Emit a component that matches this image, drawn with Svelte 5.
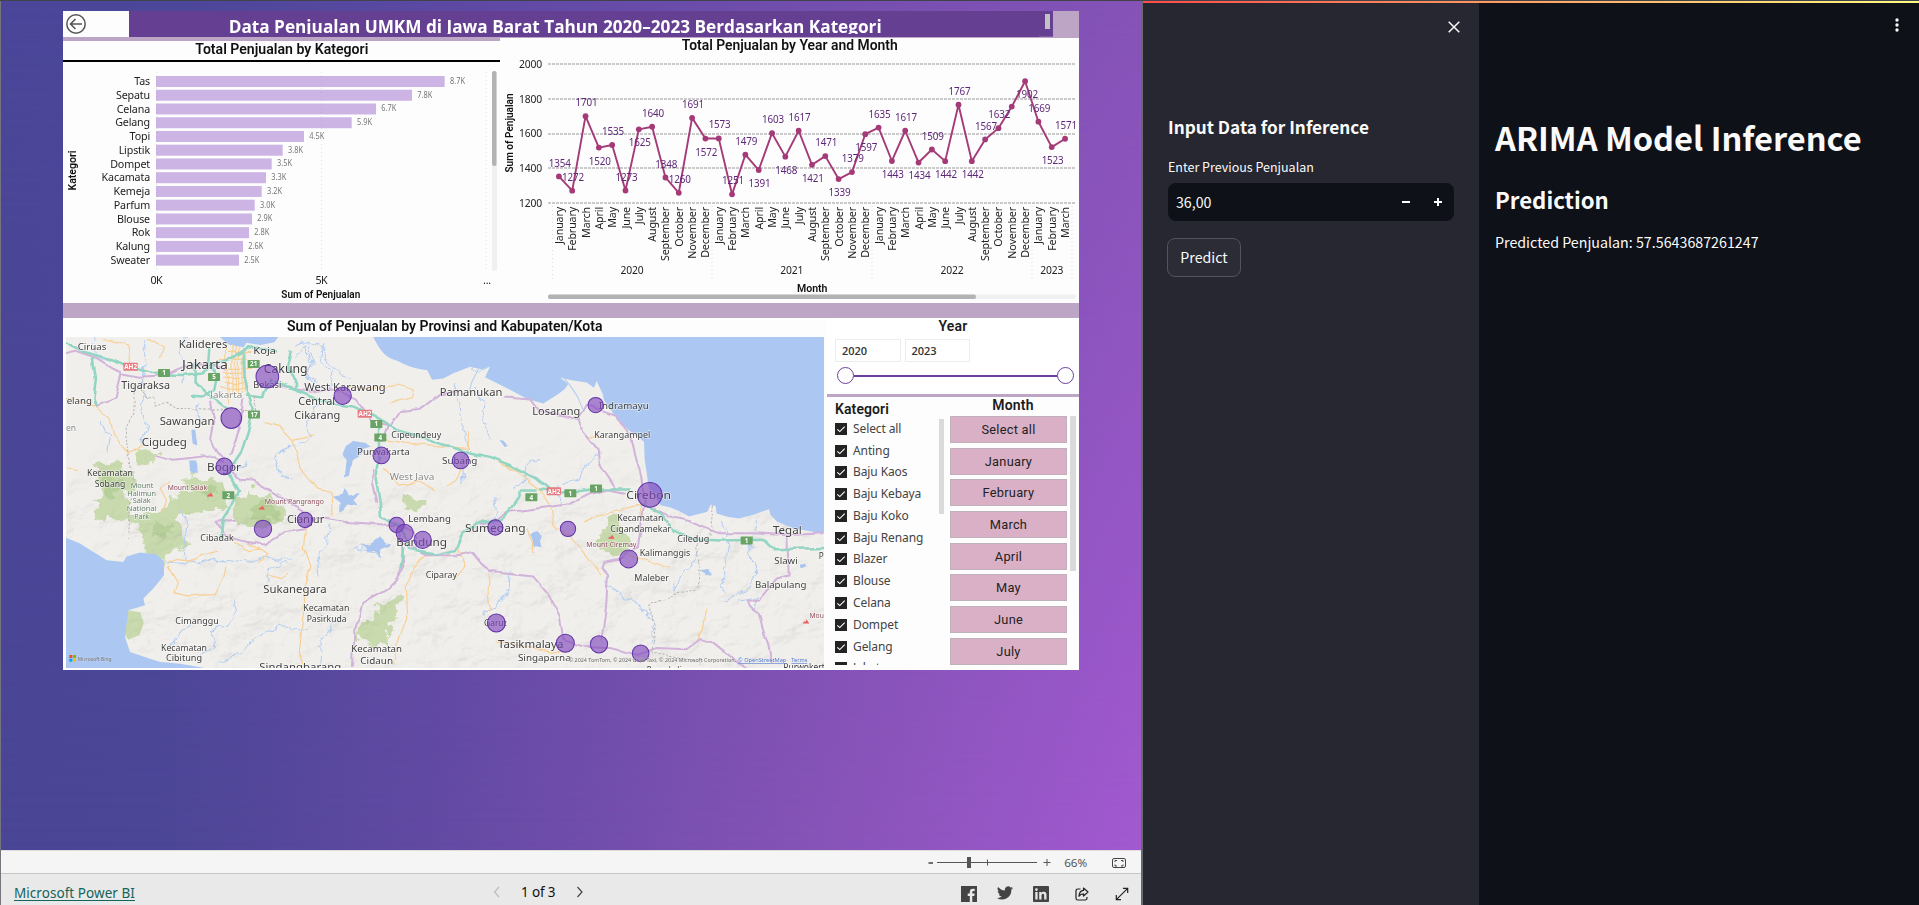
<script>
  const bars = [
    ['Tas', 288.7, '8.7K'], ['Sepatu', 256, '7.8K'], ['Celana', 220, '6.7K'], ['Gelang', 195.7, '5.9K'],
    ['Topi', 148, '4.5K'], ['Lipstik', 126.7, '3.8K'], ['Dompet', 115.7, '3.5K'], ['Kacamata', 110, '3.3K'],
    ['Kemeja', 105.7, '3.2K'], ['Parfum', 98.7, '3.0K'], ['Blouse', 96, '2.9K'], ['Rok', 93, '2.8K'],
    ['Kalung', 87, '2.6K'], ['Sweater', 83, '2.5K']
  ];

  const names = ['January', 'February', 'March', 'April', 'May', 'June', 'July', 'August', 'September', 'October', 'November', 'December'];
  // [value, y of the value label]; a null label is hidden by its neighbours
  const sales = [
    [1354, 163], [1272, 177], [1701, 102], [1520, 161.3], [1535, 130.7], [1273, 177], [1625, 142.3], [1640, 113],
    [1348, 164], [1260, 179.3], [1691, 104], [1572, 152.3], [1573, 124], [1251, 180], [1479, 140.7], [1391, 183],
    [1603, 119], [1468, 170], [1617, 117.3], [1421, 178], [1471, 142], [1339, 192], [1379, 158], [1597, 147],
    [1635, 114.3], [1443, 174], [1617, 117.3], [1434, 175], [1509, 136], [1442, 174], [1767, 91], [1442, 174],
    [1567, 126], [1632, 114], [1756, null], [1902, 94.3], [1669, 108], [1523, 160], [1571, 125]
  ];
  const px = (i) => 558.9 + i * 13.32;
  const py = (v) => 203.2 - (v - 1200) * 0.17375;
  const line = sales.map((s, i) => `${px(i)},${py(s[0])}`).join(' ');

  const categories = ['Select all', 'Anting', 'Baju Kaos', 'Baju Kebaya', 'Baju Koko', 'Baju Renang', 'Blazer', 'Blouse', 'Celana', 'Dompet', 'Gelang', 'Jaket'];
  const months = ['Select all', 'January', 'February', 'March', 'April', 'May', 'June', 'July'];

  // [text, centre x, baseline y, size, width, kind]
  const places = [
    ['Ciruas', 96, 104, 26, 86], ['Kalideres', 429, 100, 30, 146], ['Koja', 614, 116, 29, 68],
    ['Jakarta', 435, 162, 37, 138], ['Cakung', 677, 174, 37, 132], ['Tigaraksa', 257, 223, 30, 146],
    ['Bekasi', 622, 219, 26, 84], ['Jakarta', 499, 250, 25, 96, 'g'], ['elang', 58, 267, 28, 76],
    ['en', 33, 349, 26, 30, 'g'], ['Sawangan', 381, 329, 32, 164], ['Cigudeg', 313, 392, 33, 136],
    ['West Karawang', 855, 227, 30, 244], ['Central', 770, 271, 30, 110], ['Cikarang', 772, 311, 30, 138],
    ['Bogor', 492, 469, 33, 102], ['Kecamatan', 150, 484, 26, 138], ['Sobang', 150, 515, 26, 92],
    ['Mount', 246, 518, 21, 68, 'p'], ['Halimun', 245, 542, 21, 86, 'p'], ['Salak', 245, 565, 21, 54, 'p'],
    ['National', 245, 589, 21, 90, 'p'], ['Park', 245, 612, 21, 44, 'p'],
    ['Mount Salak', 382, 525, 21, 118, 'm'], ['Mount Pangrango', 703, 566, 22, 178, 'm'],
    ['Cianjur', 737, 623, 31, 112], ['Cibadak', 471, 677, 26, 100], ['Cipeundeuy', 1069, 369, 26, 150],
    ['Purwakarta', 970, 421, 27, 158], ['West Java', 1056, 495, 26, 134, 'g'], ['Lembang', 1109, 620, 28, 128],
    ['Bandung', 1085, 692, 34, 152], ['Ciparay', 1144, 788, 26, 94], ['Sukanegara', 705, 832, 33, 190],
    ['Kecamatan', 799, 887, 26, 138], ['Pasirkuda', 800, 919, 26, 120], ['Cimanggu', 411, 927, 26, 130],
    ['Kecamatan', 372, 1007, 26, 138], ['Cibitung', 372, 1037, 26, 108], ['Kecamatan', 950, 1010, 28, 152],
    ['Cidaun', 950, 1045, 28, 98], ['Sindangbarang', 721, 1068, 32, 246], ['Pamanukan', 1233, 244, 30, 188],
    ['Losarang', 1489, 300, 31, 144], ['Indramayu', 1691, 283, 28, 150], ['Karangampel', 1687, 368, 25, 168],
    ['Subang', 1199, 446, 28, 106], ['Cirebon', 1766, 551, 33, 134], ['Kecamatan', 1741, 618, 25, 138],
    ['Cigandamekar', 1742, 650, 26, 182], ['Mount Ciremay', 1654, 694, 21, 150, 'm'], ['Ciledug', 1900, 681, 26, 96],
    ['Kalimanggis', 1815, 721, 26, 152], ['Maleber', 1775, 797, 26, 104], ['Sumedang', 1306, 650, 32, 182],
    ['Tegal', 2182, 656, 32, 86], ['Slawi', 2178, 745, 27, 70], ['P', 2284, 731, 27, 15],
    ['Balapulang', 2162, 817, 29, 154], ['Mou', 2270, 908, 21, 43, 'm'], ['Garut', 1306, 931, 27, 68],
    ['Tasikmalaya', 1412, 997, 33, 196], ['Singaparna', 1453, 1037, 28, 158],
    ['Rancakalipucang', 1853, 1072, 28, 186], ['Purwokerto', 2240, 1068, 30, 140]
  ];
  const pins = [
    [622, 185, 34], [514, 309, 31], [848, 242, 26], [493, 454, 25], [964, 421, 25], [735, 614, 23], [609, 641, 26],
    [1010, 629, 23], [1034, 653, 26], [1088, 674, 26], [1202, 436, 25], [1306, 637, 23], [1607, 270, 23],
    [1769, 539, 37], [1524, 641, 23], [1706, 731, 27], [1309, 923, 27], [1516, 984, 27], [1617, 987, 26], [1742, 1014, 25]
  ];
  const shields = [
    [581, 147, '21'], [312, 174, '1'], [462, 186, '5'], [582, 298, '17'], [949, 327, '1'], [961, 367, '4'], [505, 540, '2'],
    [1414, 546, '4'], [1531, 534, '1'], [1608, 520, '1'], [2060, 676, '1']
  ];
  const asian = [[212, 155], [915, 296], [1482, 528]];
  const peaks = [[450, 538], [605, 577], [1654, 665], [2238, 919]];
</script>

<div class="screen">
  <section class="powerbi">
    <div class="report">
      <div class="canvas">
        <header class="titlebar">
          <div class="back">
            <svg width="22" height="22" viewBox="0 0 22 22"><circle cx="11" cy="11" r="9.2" fill="none" stroke="#555" stroke-width="1.5"/><path d="M17 11H6M10.500 6L5.500 11l5 5" fill="none" stroke="#555" stroke-width="1.6"/></svg>
          </div>
          <div class="title">
            <svg width="924" height="26" viewBox="129 11 924 26">
              <text x="228.700" y="33" textLength="653" lengthAdjust="spacingAndGlyphs" class="heading">Data Penjualan UMKM di Jawa Barat Tahun 2020–2023 Berdasarkan Kategori</text>
              <rect x="1045" y="14" width="5" height="15" fill="#c2c2c2"/>
              <rect x="129" y="34" width="910" height="3" fill="#653f92"/>
            </svg>
          </div>
          <div class="corner"></div>
        </header>

        <div class="charts">
          <svg class="barchart" width="437" height="262" viewBox="63 41 437 262">
            <text x="195.300" y="54" class="din t14" textLength="173" lengthAdjust="spacingAndGlyphs">Total Penjualan by Kategori</text>
            <rect x="63" y="60" width="437" height="2" fill="#000"/>
            {#each bars as [name, w, label], i}
              <rect x="156" y={76 + i * 13.744} width={w} height="11" fill="#ccb5e5"/>
              <text x="150" y={85.2 + i * 13.744} class="seg" text-anchor="end">{name}</text>
              <text x={161.3 + w} y={84 + i * 13.744} class="val" textLength="15" lengthAdjust="spacingAndGlyphs">{label}</text>
            {/each}
            {#each [156.5, 321.5, 486] as x}
              <line x1={x} x2={x} y1="72" y2="271" stroke="#888" stroke-opacity=".22" stroke-dasharray="1 3"/>
            {/each}
            <text x="156.500" y="284" class="seg" text-anchor="middle" textLength="12">0K</text>
            <text x="321.500" y="284" class="seg" text-anchor="middle" textLength="12">5K</text>
            <text x="487" y="284" class="seg" text-anchor="middle">...</text>
            <text x="281.300" y="298" class="din t10" textLength="79" lengthAdjust="spacingAndGlyphs">Sum of Penjualan</text>
            <text transform="translate(76 190.500) rotate(-90)" class="din t10" textLength="40" lengthAdjust="spacingAndGlyphs">Kategori</text>
            <rect x="492" y="71" width="5" height="200" rx="2.500" fill="#f0f0f0"/>
            <rect x="492" y="71" width="4.500" height="95" rx="2" fill="#b3b3b3"/>
          </svg>

          <svg class="linechart" width="579" height="265" viewBox="500 38 579 265">
            <text x="681.700" y="50" class="din t14" textLength="216" lengthAdjust="spacingAndGlyphs">Total Penjualan by Year and Month</text>
            {#each [2000, 1800, 1600, 1400, 1200] as v}
              <line x1="548" x2="1076" y1={Math.round(py(v))} y2={Math.round(py(v))} stroke="#cbcbcb" stroke-width="2" stroke-dasharray="3 1"/>
              <text x="519" y={py(v) + 3.7} class="seg" textLength="23" lengthAdjust="spacingAndGlyphs">{v}</text>
            {/each}
            {#each [552.5, 712, 872, 1032, 1072] as x}
              <line x1={x} x2={x} y1="206" y2="280" stroke="#dcdcdc" stroke-dasharray="1 3"/>
            {/each}
            <polyline points={line} fill="none" stroke="#a43a77" stroke-width="1.9" stroke-linejoin="round"/>
            {#each sales as [v, ly], i}
              <circle cx={px(i)} cy={py(v)} r="2.900" fill="#a43a77"/>
              {#if ly}
                <text x={px(i) - 10.7 + (i === 35 ? 1.5 : 0.6)} y={ly + 4} class="seg num" textLength="22" lengthAdjust="spacingAndGlyphs">{v}</text>
              {/if}
              <text transform="translate({px(i) + 4} 207) rotate(-90)" class="seg" text-anchor="end">{names[i % 12]}</text>
            {/each}
            {#each [[632, '2020'], [791.7, '2021'], [952, '2022'], [1051.7, '2023']] as [x, y]}
              <text x={x - 11.5} y="274" class="seg" textLength="23" lengthAdjust="spacingAndGlyphs">{y}</text>
            {/each}
            <text x="797" y="292" class="din t10" textLength="30.500" lengthAdjust="spacingAndGlyphs">Month</text>
            <text transform="translate(513 172.500) rotate(-90)" class="din t10" textLength="79" lengthAdjust="spacingAndGlyphs">Sum of Penjualan</text>
            <rect x="548" y="294.500" width="528" height="4.500" rx="2" fill="#f0f0f0"/>
            <rect x="548" y="294.500" width="428" height="4.500" rx="2" fill="#b3b3b3"/>
          </svg>
        </div>

        <div class="lower">
          <div class="mapcard">
            <svg class="maptitle" width="764" height="19" viewBox="63 318 764 19">
              <text x="287" y="331" class="din t14" textLength="315.500" lengthAdjust="spacingAndGlyphs">Sum of Penjualan by Provinsi and Kabupaten/Kota</text>
            </svg>
            <svg class="map" width="758" height="331" viewBox="18 66 2274 992" preserveAspectRatio="none">
              <defs>
                <filter id="relief" x="0" y="0" width="1" height="1">
                  <feTurbulence type="fractalNoise" baseFrequency="0.008 0.011" numOctaves="5" seed="7" result="n"/>
                  <feDiffuseLighting in="n" lighting-color="#fff" surfaceScale="26" diffuseConstant="1.150"><feDistantLight azimuth="225" elevation="60"/></feDiffuseLighting>
                </filter>
                <filter id="ragged" x="-.1" y="-.1" width="1.2" height="1.2">
                  <feTurbulence type="fractalNoise" baseFrequency="0.025" numOctaves="4" seed="3"/>
                  <feDisplacementMap in="SourceGraphic" scale="60" xChannelSelector="R" yChannelSelector="G"/>
                </filter>
                <filter id="wavy" filterUnits="userSpaceOnUse" x="-20" y="30" width="2350" height="1060">
                  <feTurbulence type="fractalNoise" baseFrequency="0.025" numOctaves="3" seed="5"/>
                  <feDisplacementMap in="SourceGraphic" scale="34" xChannelSelector="R" yChannelSelector="G"/>
                </filter>
                <filter id="gentle" filterUnits="userSpaceOnUse" x="-20" y="30" width="2350" height="1060">
                  <feTurbulence type="fractalNoise" baseFrequency="0.018" numOctaves="2" seed="9"/>
                  <feDisplacementMap in="SourceGraphic" scale="18" xChannelSelector="R" yChannelSelector="G"/>
                </filter>
                <linearGradient id="fade" x1="0" y1="0" x2="0" y2="1"><stop offset=".25" stop-color="#000"/><stop offset=".55" stop-color="#fff"/></linearGradient>
                <mask id="hills"><rect x="18" y="66" width="2274" height="992" fill="url(#fade)"/></mask>
              </defs>
              <rect x="18" y="66" width="2274" height="992" fill="#f0efec"/>

              <g fill="#c9dbae" filter="url(#ragged)">
                <path d="M112 440l30-6 25 15 35 6 16 14 4 40-24 30 30 60 50-4 60-30 10-30 40-10-10-34 30-16 40 22 50 6 10 34-10 30-40 20-60 6-40 0-14 30 40 30 10 30-34 24-40 8-12 40-24-34-30-6 4-50-30-26-34-24-26 10-34-20-30 10-10-24 24-24-24-10 40-26-14-40z"/>
                <path d="M222 420l30-16 40 8-10 26-30 10-14 18-16-20z"/>
                <path d="M510 590l26-34 40-26 50 10 30 30 20 30-10 30-40-10-20 20-40-6-34-14z"/>
                <path d="M1016 565l30-30 30 14 24 2-10 26-20 14-24-18z"/>
                <path d="M954 856l34-4 30 6 20-10 4 16-30 14-14 40-16 34 6 36-34-6-40-2-26-14 20-44 40-20 14-20z"/>
                <path d="M1602 660l30-14 20-52 20 6 14 40 26 40-20 30-34 16-26-30-20-6z"/>
              </g>
              <path d="M205 885l36 6 10 32-12 36-34 14-14-20z" fill="#c9dbae"/>
              <g fill="#a3c281" opacity=".45" filter="url(#ragged)"><path d="M570 590l34-36 40 34 20 26-60 0z"/><path d="M410 530l50-14 10 24-40 16z"/><path d="M130 490l40 10 14 34-40 10zM270 620l50 10 10 30-40 6z"/></g>
              <g mask="url(#hills)" class="shade"><rect x="18" y="66" width="2274" height="992" filter="url(#relief)"/></g>

              <g fill="#abc7f2">
                <path d="M480 66h175l-12 16-42 8-42-7-8 14-44-8-12-9z"/>
                <path d="M940 66c20 40 34 62 74 72 26 14 46 22 88 28l14 28 34-4 30-15 50-20 35 8 25-8-15 32 50 24 35 18 40 22 50 14 45-28 20-16 10-15-25-18 40 8 40 6 22 16 8-20 18 38 4 20 40 56 30 30 50 38 2 52 13 90 35 48 30 7 30 13 25 14 55-14 10-22 15 5 3 22 32 10 35 5 45-12 45-16 5 18 20 20 50 20 92 15V66z"/>
                <path d="M18 668l42 17 40 25 40 25 50 5 10-16 40-12 50 6 22 20v42l-32 40-30 30 5 20-50 15-10 80 15 45 60 20 30 10 60 5 70 12V1058H18z"/>
              </g>
              <g fill="#a9c5f0" filter="url(#gentle)">
                <path d="M855 392l24-14 40 6 16 10-24 8-16 24-20 10-8 46-16 4 6-50-12-20z"/>
                <path d="M818 545l30-6 6-18 10 20 36-8-20 24 16 20-30-6-26 18 2-26z"/>
                <path d="M898 690l32-6 30-22 14 22 24 4-20 8-20 6-2 30-12-28-18 4-6-16z"/>
                <path d="M1412 655l24-14 10 20-6 18 4 20-20-4-4-24z"/>
                <path d="M1318 374l14 4 12 14-10 4zM1920 768l24-4 16 12-20 4zM2220 746l20-4 6 8-20 6zM394 344h12l6 50-14-6zM388 436h24v34h-22z"/>
              </g>

              <g class="river" filter="url(#wavy)">
                <path d="M248 66l10 40-12 60 14 60-14 50 10 60-16 50M370 66l-10 44 14 50-6 50M700 90l40-14 40 20 30 50 36 30 30 10M710 120l20-30 24 50-14 40 30 20M740 80l20 60-20 30 30 50M790 90l-10 50 40 30-10 60M770 260l-30 60 10 40-60 30-40 40 10 44 40 20M360 570l20 60-10 50 10 50"/>
                <path d="M300 750l60-10 60 6 60-14 80 12 60-20 40 14 40-10M520 850l10 40-30 40-50 20 6 40-30 40M326 1010l24-50 50-40M810 620l-10 60-24 60 4 50M780 1040l4-60 50-70M1180 210l20 60 10 70 14 60-20 50 6 60M1620 400l-20 30-30 20-10 40-60 20-6 60M1440 430l-30 10-20 60-30 20M1300 540l10 50-20 60M1240 220l30 50 4 60 20 50"/>
                <path d="M1350 770l-10 50-30 50-40 30M1630 800l60 40 60 40 30 40-10 60M1910 690l-16 60-40 40-20 40M1990 610l14 90-14 60 6 70M2100 600l-20 60-10 50 20 60-40 60-60 30M2040 860l60-10-20 40M620 800l10-40 60-20M480 1040l60-30 60-50 60-30 80 10"/>
                <path d="M880 700l60 10M100 66l10 60 50 10M1230 130l10 40 40-10M420 260l-20 40 20 30M120 320l30 40-10 50M560 440l-40 20 30 40"/>
              </g>
              <path class="river" d="M1508 184l24 30 20 30 20 46M1256 160l-20 40-10 34"/>
              <g class="minor" filter="url(#gentle)">
                <path d="M130 70l70 20 10 60M18 250l86 20 46 40 10 50 50 56 40-30M496 96l10 170M516 90v150M536 100l-4 150M556 110v120M480 130h80M484 160h90M490 190h70M484 220h70M504 112h70M488 175h60M494 205h60M526 96v130M546 104v130M610 318l50 14 40 44 60-14M700 376l20 80 30 40 30 26 36 10 4 70"/>
                <path d="M322 740l26-10 40 4 40-16 46-10M322 752l30 50-10 30 40 10 80-4 30-54 6-34M525 680l30 26 46-4 20 14-20 30M736 640l-6 60 20 50-20 60 4 50-10 90-6 60 20 50M626 780l40 10 20-20M556 684l46 20M1000 1050l10-60 30-80-4-100 30-60 40-36M970 460l50 50 60-10 50 30M18 460l40 10M330 500l-30 20 20 40-20 30M860 210l60 14 90-14 50 14-6 24-60 14M260 66l50 30-8 36"/>
                <path d="M960 370l70 14 60 4 130 12M1225 350v46l-10 50-30 50-24 20M1310 440l60 26 66 54 40 60 10 60 40 20 60 70 40 50M1570 620l40-20 70-14 60-14M1182 790l30-40-20-50M1288 780l-4 50 6 60M1400 640l20 40v36M1700 720l60 16 70 20M1940 880l-10 60-20 40M1310 980l120 20 90 14M1330 440l20 20M1580 366h40M1740 560l4 50"/>
              </g>
              <g class="major" filter="url(#gentle)">
                <path d="M18 118l30-10 60 20 80 50 50 10 70-4 50-24 60-16 80 20M186 170l-20 80-60 24M450 260l10 60-10 50 40 60M550 250l-10 90-30 80M290 420l50 14 60-6 60-8 30 20M640 210l110 20 60-10 80 30 40 70 60 14 30-46 60-6 60-44 60-10"/>
                <path d="M500 460l40 34 40 2 70 40 40 30 40 24M560 680l50 8 60-36 60-10 40-36 80 14 60 4 100 6 50 20 14 20M530 610l-60 10 20 40 90 26M965 380l20-50M945 460l-10 40 14 60M1010 650l16 40 4 60-20 40-30 30-70 40-10 50-20 40-4 104"/>
                <path d="M1330 244l80 6 30 40 120 26 6 30 50 60 4 40 50 76M1560 310l20-40 90 30 44 70 30 120 10 70-10 70-10 60-54 40-50 10-6 16 20 20-6 100-14 100M1470 575l60-8 60-30 50-14 60 10M1040 690l60 30h90l50-10 50 60 130 14 50 60 30 60 10 70 60 20 80 4 80 20 60-20 90 4 40-30 40 10 50 40 60 46M1260 630l90-40 130-16M1780 580l50 24 60 14 80 36h110l100 6 112-6M2182 660l4 120-36 10-50 60-40 4 36 40 10 40 20 60 10 50"/>
              </g>
              <g class="toll" filter="url(#gentle)">
                <path d="M18 84l60 28 70 20 60 26 90 20 70 2 60-8 36-26 50-18 50-28 90 6M404 140v60l40 40 40 30 20 12M448 100l-4 50 30 34-8 44-40 16-30-2M550 110l4 80 24 90-14 70-20 60-40 60 30 54-20 50-26 40-6 60M690 106l-12 50 30 40v30M634 190l-26 54-50-6M640 200l80 30 60 30 100 14 60 30 70 40 90 26 120 40 70 16 60 24 80 40 46 40"/>
                <path d="M957 330v110l-10 50 12 70 4 40 50 34 24 40 10 30 80 14 60-14 20-50 60-34 60-10 20-20 30-40 6-24h50M1440 522l60 10 70-2 60-10h80M1740 570l60 24 40 54 60 24 80 4 130-2 30 28 150-4"/>
                <path d="M98 126l10 66-8 60 8 20M1030 700l-8 60"/>
              </g>
              <g class="border" filter="url(#gentle)">
                <path d="M586 240v44l-240-4-30-20-30 10-10-24-20 4-20-30 10-20-24 14v80l-24 40 10 90 10 70-10 80-6 100"/>
                <path d="M1960 570l-10 90-40 30 10 80-10 50-80 26-64 24 20 60-10 80 110 20 40 20"/>
              </g>

              {#each asian as [x, y]}
                <g transform="translate({x} {y})"><rect x="-22" y="-12" width="43" height="24" rx="2" fill="#e57b80"/><text y="7" font-size="19" font-weight="700" fill="#fff" text-anchor="middle">AH2</text></g>
              {/each}
              {#each shields as [x, y, n]}
                <g transform="translate({x} {y})"><rect x="-18" y="-12" width="36" height="24" rx="2" fill="#69a465"/><text y="7" font-size="19" font-weight="700" fill="#fff" text-anchor="middle">{n}</text></g>
              {/each}
              {#each peaks as [x, y]}
                <path transform="translate({x} {y})" d="M-10 6l5-7 3 2 4-7 8 12z" fill="#ee5d5d"/>
              {/each}
              {#each places as [t, x, y, s, w, k]}
                <text x={x - w / 2} {y} font-size={s} textLength={w} lengthAdjust="spacingAndGlyphs" class="place {k ?? 'n'}">{t}</text>
              {/each}
              {#each pins as [x, y, r]}
                <circle cx={x} cy={y} {r} fill="#8047bd" fill-opacity=".64" stroke="#5f33a5" stroke-width="3"/>
              {/each}
              <g transform="translate(28 1019)"><path fill="#f25022" d="M0 0h9v9H0z"/><path fill="#7fba00" d="M11 0h9v9h-9z"/><path fill="#00a4ef" d="M0 11h9v9H0z"/><path fill="#ffb900" d="M11 11h9v9h-9z"/></g>
              <text x="53" y="1036" font-size="18" class="place c" textLength="102" lengthAdjust="spacingAndGlyphs">Microsoft Bing</text>
              <text x="1526" y="1041" font-size="18" class="place c" textLength="502" lengthAdjust="spacingAndGlyphs">© 2024 TomTom, © 2024 Grab Taxi, © 2024 Microsoft Corporation,</text>
              <text x="2034" y="1041" font-size="18" class="place l" textLength="145" lengthAdjust="spacingAndGlyphs">© OpenStreetMap</text>
              <text x="2194" y="1041" font-size="18" class="place l" textLength="48" lengthAdjust="spacingAndGlyphs">Terms</text>
            </svg>
          </div>

          <aside class="slicers">
            <div class="year">
              <div class="slicer-title">Year</div>
              <div class="inputs"><span>2020</span><span>2023</span></div>
              <div class="range"><i></i><b></b><i></i></div>
            </div>
            <div class="pair">
              <div class="cats">
                <div class="slicer-title left">Kategori</div>
                <div class="scroller">
                  <ul>
                    {#each categories as c}
                      <li><svg width="12" height="12" viewBox="0 0 12 12"><rect width="12" height="12" fill="#232323"/><path d="M2.300 6.300l2.500 2.300 4.900-5" fill="none" stroke="#fff" stroke-width="1.100"/></svg>{c}</li>
                    {/each}
                  </ul>
                  <div class="thumb short"></div>
                </div>
              </div>
              <div class="mons">
                <div class="slicer-title">Month</div>
                <div class="scroller">
                  <div class="buttons">
                    {#each months as m}<div>{m}</div>{/each}
                  </div>
                  <div class="thumb long"></div>
                </div>
              </div>
            </div>
          </aside>
        </div>
      </div>
    </div>

    <div class="zoombar">
      <svg width="220" height="22" viewBox="922 851 220 22">
        <path d="M938 862.500h100M988.500 859.500v6M1044.500 862.500h7M1048 859v7" fill="none" stroke="#555" stroke-width="1"/>
        <path d="M929.500 863h4.500" stroke="#444" stroke-width="1.500"/>
        <rect x="968" y="857" width="4" height="11" fill="#555"/>
        <text x="1065.300" y="867" class="seg pct" textLength="22.700" lengthAdjust="spacingAndGlyphs">66%</text>
        <rect x="1113.500" y="858.500" width="13" height="9" rx="1.500" fill="none" stroke="#444"/>
        <path d="M1116 862v-1.500h2M1122 860.500h2v1.500M1124 864.500v1.500h-2M1118 866h-2v-1.500" fill="none" stroke="#444"/>
      </svg>
    </div>

    <footer>
      <a href="#report">Microsoft Power BI</a>
      <div class="pager">
        <svg width="8" height="12" viewBox="0 0 8 12"><path d="M6 1L1.500 6 6 11" fill="none" stroke="#bdbdbd" stroke-width="1.200"/></svg>
        <span>1 of 3</span>
        <svg width="8" height="12" viewBox="0 0 8 12"><path d="M1.500 1L6 6l-4.500 5" fill="none" stroke="#444" stroke-width="1.200"/></svg>
      </div>
      <div class="social">
        <svg width="16" height="16" viewBox="0 0 16 16"><path d="M0 0h16v16h-4.700V10h2l.4-2.400h-2.400V6.200c0-.8.4-1.200 1.200-1.200h1.200V2.900c-.5-.1-1-.15-1.700-.15C9.900 2.750 8.800 3.900 8.800 5.900v1.700H6.700V10h2.100v6H0z" fill="#444"/></svg>
        <svg class="bird" width="16" height="14" viewBox="0 0 24 20"><path d="M24 2.400c-.9.400-1.800.7-2.800.8 1-.6 1.800-1.600 2.200-2.700-1 .6-2 1-3.100 1.200a4.900 4.900 0 0 0-8.400 4.500C7.700 6 4.100 4 1.700 1a4.900 4.900 0 0 0 1.500 6.600c-.8 0-1.600-.2-2.200-.6 0 2.300 1.600 4.400 3.900 4.900-.7.200-1.500.2-2.200.1.600 2 2.400 3.400 4.600 3.400A9.900 9.900 0 0 1 0 17.500 14 14 0 0 0 21.500 5c1-.7 1.800-1.600 2.500-2.600z" fill="#444"/></svg>
        <svg width="16" height="16" viewBox="0 0 16 16"><rect width="16" height="16" rx=".8" fill="#444"/><path d="M2.300 6h2.300v7.500H2.300zM3.450 2.200a1.350 1.350 0 1 1 0 2.700 1.350 1.350 0 0 1 0-2.700zM6.200 6h2.200v1c.4-.7 1.200-1.200 2.300-1.200 2.300 0 2.800 1.500 2.800 3.500v4.200h-2.300V9.800c0-1 0-2.100-1.300-2.100S8.500 8.700 8.500 9.700v3.800H6.200z" fill="#e9e9e9"/></svg>
        <svg width="14" height="14" viewBox="0 0 14 14" fill="none" stroke="#222" stroke-width="1.200"><path d="M5.500 2H2.800C1.700 2 1 2.700 1 3.800v7.400C1 12.300 1.700 13 2.800 13h7.400c1.100 0 1.800-.7 1.800-1.800V10"/><path d="M8.500 1l4.500 4-4.500 4V6.800C6.300 6.800 5 7.700 4 9.300 4.200 6 5.500 3.700 8.500 3.400z" stroke-linejoin="round"/></svg>
        <svg width="14" height="14" viewBox="0 0 14 14" fill="none" stroke="#222" stroke-width="1.200"><path d="M1.300 12.700L12.700 1.300M8 1.300h4.700V6M1.300 8v4.700H6"/></svg>
      </div>
    </footer>
  </section>

  <section class="app">
    <div class="sidebar">
      <svg class="close" width="12" height="12" viewBox="0 0 12 12"><path d="M.7.7l10.600 10.600M11.300.7L.7 11.300" stroke="#fafafa" stroke-width="1.500"/></svg>
      <h3>Input Data for Inference</h3>
      <div class="label">Enter Previous Penjualan</div>
      <div class="number">
        <span>36,00</span>
        <svg width="8" height="8" viewBox="0 0 8 8"><path d="M0 4h8" stroke="#fff" stroke-width="2"/></svg>
        <svg width="8" height="8" viewBox="0 0 8 8"><path d="M0 4h8M4 0v8" stroke="#fff" stroke-width="2"/></svg>
      </div>
      <div class="predict">Predict</div>
    </div>
    <div class="main">
      <svg class="menu" width="4" height="14" viewBox="0 0 4 14" fill="#fafafa"><circle cx="2" cy="2" r="1.700"/><circle cx="2" cy="7" r="1.700"/><circle cx="2" cy="12" r="1.700"/></svg>
      <h1>ARIMA Model Inference</h1>
      <h2>Prediction</h2>
      <p>Predicted Penjualan: 57.5643687261247</p>
    </div>
  </section>
</div>

<style>
  :global(body) { margin: 0; overflow: hidden; background: #0e1117; }
  * { box-sizing: border-box; }
  svg { display: block; flex: none; }
  .screen { display: grid; grid-template-columns: 1143px 776px; width: 1919px; height: 905px; border-top: 1px solid #40434a; font-family: "Open Sans", sans-serif; }

  .powerbi { display: flex; flex-direction: column; height: 904px; border-left: 1px solid #77757c; border-right: 2px solid #69696b; }
  .report { position: relative; isolation: isolate; height: 849px; padding: 10px 0 0 62px; background: linear-gradient(90deg, #4b4699 0, #4d479a 17%, #604aa5 44%, #8653b8 100%); }
  .report::before { content: ""; position: absolute; inset: 0; z-index: -1; background: linear-gradient(90deg, #4a4594 0, #4c4696 14%, #5f49a1 35%, #8553b6 70%, #a259d0 100%); mask-image: linear-gradient(transparent, #000); }
  .canvas { width: 1016px; height: 659px; background: #bda5c6; }
  .titlebar { display: flex; height: 26px; }
  .back { width: 66px; padding: 2px 0 0 2px; background: #fdfdfd; }
  .title { width: 924px; background: #653f92; border-bottom: 1px solid #7f5ca5; }
  .heading { font: 700 17.500px "Open Sans", sans-serif; fill: #fff; }
  .charts { display: flex; align-items: flex-end; height: 266px; }
  .barchart, .linechart { background: #fdfdfd; }
  .din { font-family: Roboto, sans-serif; font-weight: 600; fill: #111; }
  .t14 { font-size: 14px; }
  .t10 { font-size: 10.500px; }
  .seg { font: 10.700px "Noto Sans", sans-serif; fill: #222; letter-spacing: -.15px; }
  .val { font: 8px "Noto Sans", sans-serif; fill: #777; }
  .num { fill: #5e2878; }
  .pct { font-size: 11.500px; fill: #555; }

  .lower { display: flex; height: 367px; padding-top: 15px; }
  .mapcard { width: 764px; background: #fdfdfd; }
  .map { margin-left: 3px; }
  .shade { mix-blend-mode: multiply; opacity: .16; }
  .river { fill: none; stroke: #b3cdf2; stroke-width: 3; stroke-linejoin: round; }
  .minor { fill: none; stroke: #f9cf93; stroke-width: 3.500; stroke-linejoin: round; }
  .major { fill: none; stroke: #d2b3da; stroke-width: 6; stroke-linejoin: round; }
  .toll { fill: none; stroke: #92d5c3; stroke-width: 7.500; stroke-linejoin: round; }
  .border { fill: none; stroke: #b5b5b5; stroke-width: 3; stroke-dasharray: 7 5; }
  .map text { font-family: "Noto Sans", sans-serif; }
  .place { paint-order: stroke; stroke: #fff; stroke-opacity: .6; stroke-width: 4px; }
  .n { fill: #404040; }
  .g { fill: #8b8b8b; }
  .p { fill: #66806a; }
  .m { fill: #8c4b5a; }
  .c { fill: #666; stroke-width: 1px; }
  .l { fill: #4f74cc; stroke-width: 1px; text-decoration: underline; }

  .slicers { width: 252px; background: #fdfdfd; }
  .slicer-title { font: 600 14px/17px Roboto, sans-serif; letter-spacing: .2px; color: #1b1b1b; text-align: center; }
  .year { height: 79px; padding: 0 0 0 8px; background: #fff; border-bottom: 3px solid #bda5c6; }
  .year .slicer-title { width: 236px; padding-top: 0; margin-bottom: 4px; }
  .inputs { display: flex; gap: 4px; }
  .inputs span { width: 65.500px; height: 23px; padding-left: 6px; border: 1px solid #ededed; font: 600 11px/22px "Open Sans", sans-serif; color: #333; }
  .range { display: flex; align-items: center; margin: 5px 5px 0 2px; }
  .range i { width: 17px; height: 17px; border: 1.500px solid #6b409c; border-radius: 50%; background: #fff; }
  .range b { flex: 1; height: 2px; background: #6b409c; }
  .pair { display: flex; height: 273px; }
  .cats { width: 121px; padding: 4px 4px 0 8px; }
  .cats .left { text-align: left; line-height: 16px; height: 18px; letter-spacing: .1px; }
  .scroller { display: flex; justify-content: space-between; overflow: hidden; }
  .cats .scroller { height: 246px; }
  ul { margin: -1px 0 0; padding: 0; list-style: none; }
  li { display: flex; align-items: center; gap: 6px; height: 21.770px; font: 12px/20px "Noto Sans", sans-serif; letter-spacing: -.1px; color: #444; }
  .thumb { background: #dadada; }
  .short { width: 5px; height: 96px; margin-top: -1px; }
  .mons { width: 131px; padding: 0 3px 0 2px; }
  .mons .slicer-title { height: 19px; line-height: 17px; width: 126px; }
  .buttons { display: flex; flex-direction: column; gap: 4.700px; width: 117px; }
  .buttons div { height: 27px; border: 1px solid #c0b0b9; background: #dab0c7; text-align: center; font: 12.800px/25px Roboto, sans-serif; letter-spacing: .25px; color: #222; }
  .long { width: 6px; height: 155px; }

  .zoombar { display: flex; justify-content: flex-end; height: 23px; background: #f5f5f5; border-top: 1px solid #ddd; }
  footer { display: flex; align-items: flex-start; height: 32px; padding-left: 13px; background: #e9e9e9; border-top: 1px solid #c6c6c6; }
  footer a { width: 479px; margin-top: 9px; font: 13.500px/20px "Noto Sans", sans-serif; letter-spacing: .05px; color: #14645c; text-decoration: underline; text-underline-offset: 2px; }
  .pager { display: flex; align-items: center; gap: 20px; width: 468px; height: 20px; margin-top: 8px; }
  .pager span { width: 35px; font: 13.500px/20px "Noto Sans", sans-serif; color: #111; letter-spacing: -.15px; white-space: nowrap; }
  .social { display: flex; align-items: center; gap: 20px; height: 16px; margin-top: 12px; }
  .bird { margin-top: -2px; }
  .social svg:nth-child(4) { margin-left: 6px; }
  .social svg:nth-child(5) { margin-left: 6px; }

  .app { display: flex; height: 904px; border-top: 2px solid; border-image: linear-gradient(90deg, #ff4b4b, #fffd80) 1; font-family: "Noto Sans CJK SC", sans-serif; color: #fafafa; }
  .sidebar { width: 336px; padding: 18px 25px 0; background: #262730; }
  .close { margin: 0 -6px 0 auto; }
  h1, h2, h3, p { margin: 0; white-space: nowrap; }
  h3 { margin-top: 82px; font-size: 17.200px; line-height: 24px; font-weight: 700; }
  .label { margin-top: 18px; font-size: 12.500px; line-height: 20px; }
  .number { display: flex; align-items: center; width: 286px; height: 38px; margin-top: 6px; padding: 0 12px 0 8px; border-radius: 8px; background: #0e1117; font-size: 14.200px; }
  .number span { flex: 1; line-height: 38px; }
  .number svg + svg { margin-left: 24px; }
  .predict { width: 74px; height: 39px; margin: 17px 0 0 -1px; border: 1px solid #52535c; border-radius: 8px; background: #2b2c36; text-align: center; font-size: 14.200px; line-height: 36px; }
  .main { width: 440px; padding: 15px 17px 0 16px; background: #0e1117; }
  .menu { margin-left: 400px; }
  h1 { margin-top: 81px; font-size: 32.600px; line-height: 48px; font-weight: 700; }
  h2 { margin-top: 21px; font-size: 22.200px; line-height: 34px; font-weight: 700; }
  p { margin-top: 14px; font-size: 14.250px; line-height: 24px; }
</style>
